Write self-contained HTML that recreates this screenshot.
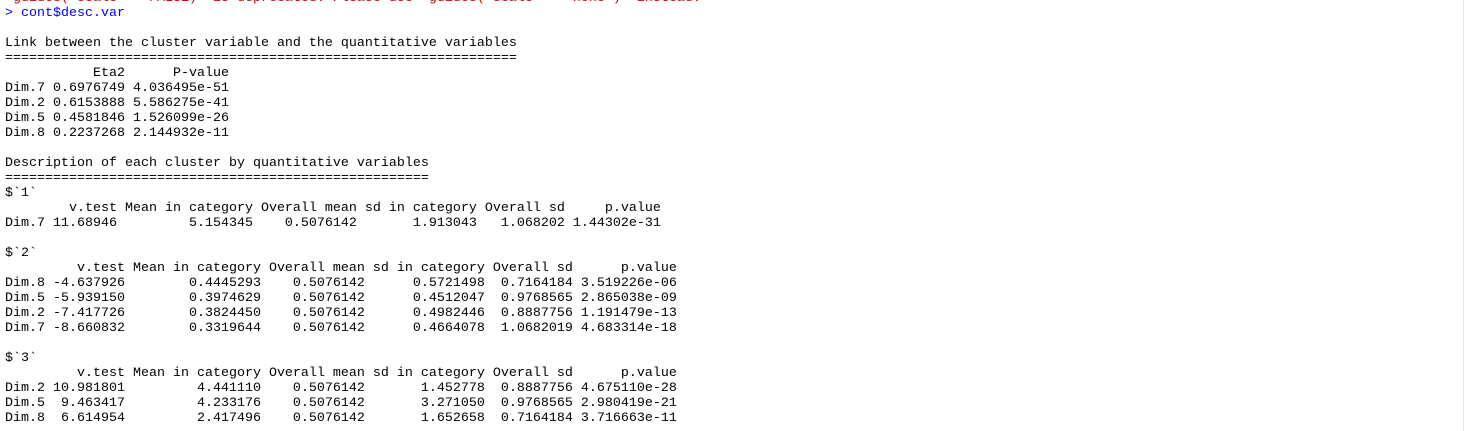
<!DOCTYPE html>
<html><head><meta charset="utf-8">
<style>
html,body{margin:0;padding:0;background:#fff;width:1465px;height:431px;overflow:hidden;position:relative}
pre{position:absolute;left:5px;top:-9px;margin:0;font-family:"Liberation Mono",monospace;font-size:13.33px;line-height:15px;color:#000;white-space:pre}
.r{color:#c4060b}.b{color:#0000ff}
.sb{position:absolute;left:1463px;top:0;width:1px;height:431px;background:#e6e6e6}
</style></head><body>
<pre><span class="r">`guides(&lt;scale&gt; = FALSE)` is deprecated. Please use `guides(&lt;scale&gt; = "none")` instead.</span>
<span class="b">&gt; cont$desc.var</span>

Link between the cluster variable and the quantitative variables
================================================================
           Eta2      P-value
Dim.7 0.6976749 4.036495e-51
Dim.2 0.6153888 5.586275e-41
Dim.5 0.4581846 1.526099e-26
Dim.8 0.2237268 2.144932e-11

Description of each cluster by quantitative variables
=====================================================
$`1`
        v.test Mean in category Overall mean sd in category Overall sd     p.value
Dim.7 11.68946         5.154345    0.5076142       1.913043   1.068202 1.44302e-31

$`2`
         v.test Mean in category Overall mean sd in category Overall sd      p.value
Dim.8 -4.637926        0.4445293    0.5076142      0.5721498  0.7164184 3.519226e-06
Dim.5 -5.939150        0.3974629    0.5076142      0.4512047  0.9768565 2.865038e-09
Dim.2 -7.417726        0.3824450    0.5076142      0.4982446  0.8887756 1.191479e-13
Dim.7 -8.660832        0.3319644    0.5076142      0.4664078  1.0682019 4.683314e-18

$`3`
         v.test Mean in category Overall mean sd in category Overall sd      p.value
Dim.2 10.981801         4.441110    0.5076142       1.452778  0.8887756 4.675110e-28
Dim.5  9.463417         4.233176    0.5076142       3.271050  0.9768565 2.980419e-21
Dim.8  6.614954         2.417496    0.5076142       1.652658  0.7164184 3.716663e-11</pre>
<div class="sb"></div>
</body></html>
